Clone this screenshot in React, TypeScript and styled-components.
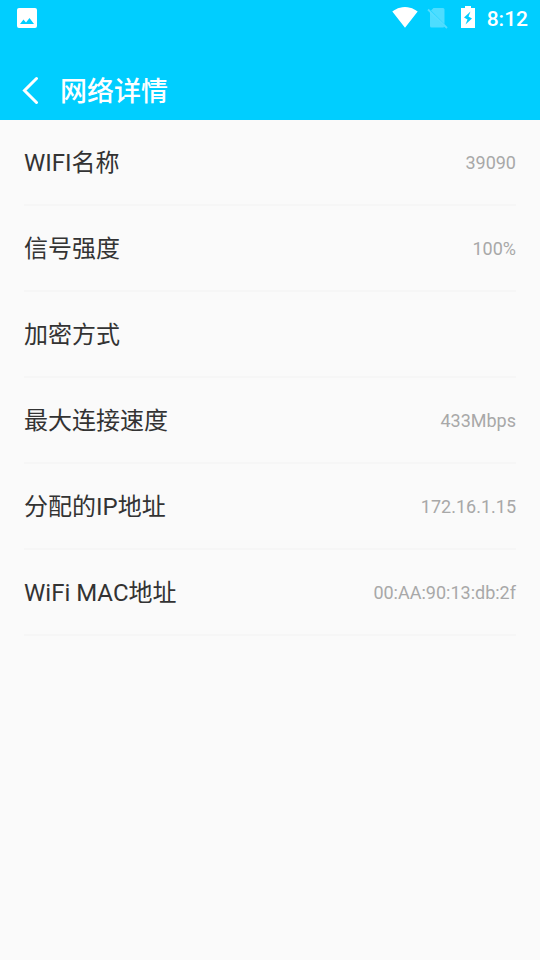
import React from "react";
import styled, { createGlobalStyle } from "styled-components";

const GlobalStyle = createGlobalStyle`
  * { box-sizing: border-box; }
  body {
    margin: 0;
    background: #fafafa;
    font-family: Roboto, "Noto Sans CJK SC", sans-serif;
  }
`;

const Header = styled.header`
  background: #00ceff;
  color: #fff;
`;

const StatusBar = styled.div`
  display: flex;
  align-items: center;
  justify-content: space-between;
  height: 36px;
  padding: 0 12px 0 15px;
`;

const StatusIcons = styled.div`
  display: flex;
  align-items: center;
`;

const Icon = styled.svg<{ $gap?: number }>`
  display: block;
  margin-right: ${(p) => p.$gap ?? 0}px;
`;

const Clock = styled.time`
  font-size: 21px;
  font-weight: 500;
  line-height: 36px;
  padding-top: 2px;
`;

const TitleBar = styled.div`
  display: flex;
  align-items: center;
  height: 84px;
  padding: 24px 20px 0;
`;

const BackButton = styled.button`
  display: flex;
  padding: 0;
  margin-right: 18px;
  border: 0;
  background: none;
  color: inherit;
`;

const Title = styled.h1`
  margin: 0;
  padding-top: 4px;
  font-size: 27px;
  font-weight: 500;
  line-height: 40px;
`;

const Details = styled.dl`
  margin: 0;
  padding: 0 24px;
`;

const Row = styled.div`
  display: flex;
  align-items: center;
  justify-content: space-between;
  height: 86px;
  padding-top: 2px;
  border-bottom: 2px solid #f6f6f6;
`;

const Label = styled.dt`
  color: #333;
  font-size: 24px;
  line-height: 36px;
`;

const Value = styled.dd`
  margin: 0;
  color: #a8a8a8;
  font-size: 18px;
  line-height: 24px;
`;

const details = [
  { label: "WIFI名称", value: "39090" },
  { label: "信号强度", value: "100%" },
  { label: "加密方式", value: "" },
  { label: "最大连接速度", value: "433Mbps" },
  { label: "分配的IP地址", value: "172.16.1.15" },
  { label: "WiFi MAC地址", value: "00:AA:90:13:db:2f" },
];

export default function App() {
  return (
    <>
      <GlobalStyle />
      <Header>
        <StatusBar>
          <Icon width="24" height="24" viewBox="0 0 24 24" fill="#fff" aria-hidden="true">
            <path fillRule="evenodd" d="M4 2h16a2 2 0 0 1 2 2v16a2 2 0 0 1-2 2H4a2 2 0 0 1-2-2V4a2 2 0 0 1 2-2zm1 16h14l-4.500-6-3.500 4.500L8.500 13.500z" />
          </Icon>
          <StatusIcons>
            <Icon $gap={9} width="26" height="24" viewBox="0 0 26 24" fill="#fff" aria-hidden="true">
              <path d="M13 21.700 25.700 5.600C25.200 5.200 20.300 1 13 1S.8 5.200.3 5.600z" />
            </Icon>
            <Icon $gap={12} width="22" height="24" viewBox="0 0 22 24" aria-hidden="true">
              <path d="M6.500 2H16a1.500 1.500 0 0 1 1.500 1.500V18L4 4.500zM3 6.500 17.500 21 16 21.500H4.500A1.500 1.500 0 0 1 3 20z" fill="#fff" opacity=".3" />
              <path d="M1 3.500 20 22" stroke="#fff" strokeWidth="1.800" opacity=".32" />
            </Icon>
            <Icon $gap={12} width="14" height="24" viewBox="0 0 14 24" fill="#fff" aria-hidden="true">
              <path fillRule="evenodd" d="M4 0h6v2h4v20H0V2h4zM9.500 5.500 3 11.500 6.500 13.500 4.500 18.500 11 12.500 7.500 10.500z" />
            </Icon>
            <Clock>8:12</Clock>
          </StatusIcons>
        </StatusBar>
        <TitleBar>
          <BackButton type="button" aria-label="返回">
            <Icon width="22" height="28" viewBox="0 0 22 28" fill="none" stroke="#fff" strokeWidth="3" strokeLinecap="round" aria-hidden="true">
              <path d="M16.500 2.500 4.500 14.500l12 12" />
            </Icon>
          </BackButton>
          <Title>网络详情</Title>
        </TitleBar>
      </Header>
      <Details>
        {details.map((item) => (
          <Row key={item.label}>
            <Label>{item.label}</Label>
            <Value>{item.value}</Value>
          </Row>
        ))}
      </Details>
    </>
  );
}
